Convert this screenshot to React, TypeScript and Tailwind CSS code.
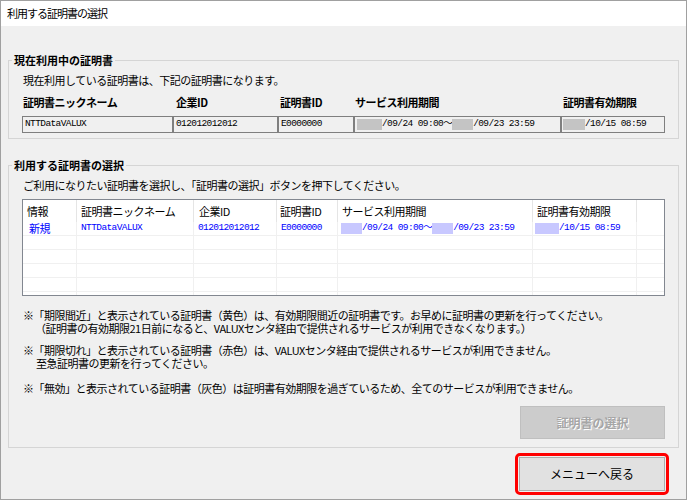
import React from 'react';

const jp = "font-['Noto_Sans_CJK_JP',sans-serif]";
const mono = "font-['Liberation_Mono','Noto_Sans_CJK_JP',monospace] text-[9.5px] tracking-[-0.6px]";

const currentCols = [
  { w: 'w-[151px]', head: '証明書ニックネーム', hp: 'pl-[1px]' },
  { w: 'w-[105px]', head: '企業ID', hp: 'pl-[3px]' },
  { w: 'w-[76px]', head: '証明書ID', hp: 'pl-[2px]' },
  { w: 'w-[207px]', head: 'サービス利用期間', hp: 'pl-[1px]' },
  { w: 'w-[104px]', head: '証明書有効期限', hp: 'pl-[2px]' },
];

const listCols = [
  { w: 'w-[54px]', head: '情報', hp: 'pl-[4px]' },
  { w: 'w-[117px]', head: '証明書ニックネーム', hp: 'pl-[4px]' },
  { w: 'w-[83px]', head: '企業ID', hp: 'pl-[5px]' },
  { w: 'w-[61px]', head: '証明書ID', hp: 'pl-[3px]' },
  { w: 'w-[195px]', head: 'サービス利用期間', hp: 'pl-[4px]' },
  { w: 'w-[104px]', head: '証明書有効期限', hp: 'pl-[4px]' },
];

const Mask = ({ w, color }: { w: string; color: string }) => (
  <span className={`inline-block h-[11px] ${w} ${color}`} />
);

const GroupBox = ({ title, className, children }: { title: string; className?: string; children: React.ReactNode }) => (
  <fieldset className={`ml-[7px] w-[671px] border border-[#d5d5d5] pl-[3px] ${className ?? ''}`}>
    <legend className={`px-[2px] text-[11px] leading-[14px] font-bold text-black ${jp}`}>{title}</legend>
    {children}
  </fieldset>
);

const CurrentCert = () => (
  <GroupBox title="現在利用中の証明書" className="mt-[27px] pb-[5px]">
    <div className={`pl-[10px] text-[11px] tracking-[-0.5px] text-black ${jp}`}>
      <div className="mt-[5px] pl-[1px] leading-[16px]">現在利用している証明書は、下記の証明書になります。</div>
      <div className="mt-[6px] flex leading-[16px] font-bold">
        {currentCols.map((c) => (
          <div key={c.head} className={`${c.w} ${c.hp}`}>{c.head}</div>
        ))}
      </div>
      <div className={`mt-[6px] flex h-[17px] ${mono}`}>
        <div className="w-[151px] border border-[#7f7f7f] pl-[2px] flex items-center">NTTDataVALUX</div>
        <div className="w-[105px] border border-[#7f7f7f] pl-[2px] flex items-center">012012012012</div>
        <div className="w-[76px] border border-[#7f7f7f] pl-[2px] flex items-center">E0000000</div>
        <div className="w-[207px] border border-[#7f7f7f] pl-[2px] flex items-center whitespace-pre">
          <Mask w="w-[25px]" color="bg-[#c4c4c4]" />
          <span>/09/24 09:00～</span>
          <Mask w="w-[21px]" color="bg-[#c4c4c4]" />
          <span>/09/23 23:59</span>
        </div>
        <div className="w-[104px] border border-[#7f7f7f] pl-[1px] flex items-center">
          <Mask w="w-[22px]" color="bg-[#c4c4c4]" />
          <span>/10/15 08:59</span>
        </div>
      </div>
    </div>
  </GroupBox>
);

const CertList = () => {
  const emptyRows = [0, 1, 2, 3];
  return (
    <div className="mt-[6px] h-[97px] w-[643px] border border-[#828790] bg-white overflow-hidden">
      <div className={`flex h-[22px] text-[11px] tracking-[-0.5px] text-black ${jp}`}>
        {listCols.map((c) => (
          <div key={c.head} className={`${c.w} ${c.hp} flex items-center border-r border-[#e5e5e5]`}>{c.head}</div>
        ))}
        <div className="flex-1" />
      </div>
      <div className="flex h-[14px] border-b border-[#f0f0f0] text-[#0000ff]">
        <div className={`w-[54px] pl-[6px] border-r border-[#f0f0f0] flex items-center text-[11px] leading-[13px] ${jp}`}>新規</div>
        <div className={`w-[117px] pl-[4px] border-r border-[#f0f0f0] flex items-center ${mono}`}>NTTDataVALUX</div>
        <div className={`w-[83px] pl-[4px] border-r border-[#f0f0f0] flex items-center ${mono}`}>012012012012</div>
        <div className={`w-[61px] pl-[4px] border-r border-[#f0f0f0] flex items-center ${mono}`}>E0000000</div>
        <div className={`w-[195px] pl-[3px] border-r border-[#f0f0f0] flex items-center whitespace-pre ${mono}`}>
          <Mask w="w-[21px]" color="bg-[#c8c8ff]" />
          <span>/09/24 09:00～</span>
          <Mask w="w-[21px]" color="bg-[#c8c8ff]" />
          <span>/09/23 23:59</span>
        </div>
        <div className={`w-[104px] pl-[2px] border-r border-[#f0f0f0] flex items-center ${mono}`}>
          <Mask w="w-[24px]" color="bg-[#c8c8ff]" />
          <span>/10/15 08:59</span>
        </div>
        <div className="flex-1" />
      </div>
      {emptyRows.map((r) => (
        <div key={r} className="flex h-[14px] border-b border-[#f0f0f0]">
          {listCols.map((c) => (
            <div key={c.head} className={`${c.w} border-r border-[#f0f0f0]`} />
          ))}
          <div className="flex-1" />
        </div>
      ))}
      <div className="flex h-[14px]">
        {listCols.map((c) => (
          <div key={c.head} className={`${c.w} border-r border-[#f0f0f0]`} />
        ))}
      </div>
    </div>
  );
};

const SelectCert = () => (
  <GroupBox title="利用する証明書の選択" className="mt-[19px] pb-[8px]">
    <div className={`pl-[10px] text-[11px] tracking-[-0.5px] text-black ${jp}`}>
      <div className="mt-[5px] pl-[1px] leading-[16px]">
        ご利用になりたい証明書を選択し、「証明書の選択」ボタンを押下してください。
      </div>
      <CertList />
      <div className="mt-[13px] pl-[1px] leading-[13px]">
        <div>※「期限間近」と表示されている証明書（黄色）は、有効期限間近の証明書です。お早めに証明書の更新を行ってください。</div>
        <div className="pl-[12px]">（証明書の有効期限21日前になると、VALUXセンタ経由で提供されるサービスが利用できなくなります。）</div>
      </div>
      <div className="mt-[9px] pl-[1px] leading-[13px]">
        <div>※「期限切れ」と表示されている証明書（赤色）は、VALUXセンタ経由で提供されるサービスが利用できません。</div>
        <div className="pl-[13px]">至急証明書の更新を行ってください。</div>
      </div>
      <div className="mt-[12px] pl-[1px] leading-[13px]">
        ※「無効」と表示されている証明書（灰色）は証明書有効期限を過ぎているため、全てのサービスが利用できません。
      </div>
      <div className="mt-[11px] flex w-[643px] justify-end">
        <button
          disabled
          className={`h-[33px] w-[145px] border border-[#bfbfbf] bg-[#cccccc] text-[12px] font-bold tracking-normal text-[#a6a6a6] [text-shadow:1px_1px_0_#ffffff] ${jp}`}
        >
          証明書の選択
        </button>
      </div>
    </div>
  </GroupBox>
);

export default function App() {
  return (
    <div className="w-[687px] h-[500px] border border-[#a0a0a0] bg-[#f0f0f0] flex flex-col overflow-hidden">
      <div className={`h-[25px] bg-white pl-[6px] flex items-center text-[11px] tracking-[-1px] text-black ${jp}`}>
        利用する証明書の選択
      </div>
      <CurrentCert />
      <SelectCert />
      <div className="mt-[5px] mr-[17px] self-end rounded-[5px] border-[3px] border-[#ff0000] p-[1px]">
        <button className={`h-[34px] w-[146px] border border-[#adadad] bg-[#e1e1e1] text-[12px] text-black ${jp}`}>
          メニューへ戻る
        </button>
      </div>
    </div>
  );
}
